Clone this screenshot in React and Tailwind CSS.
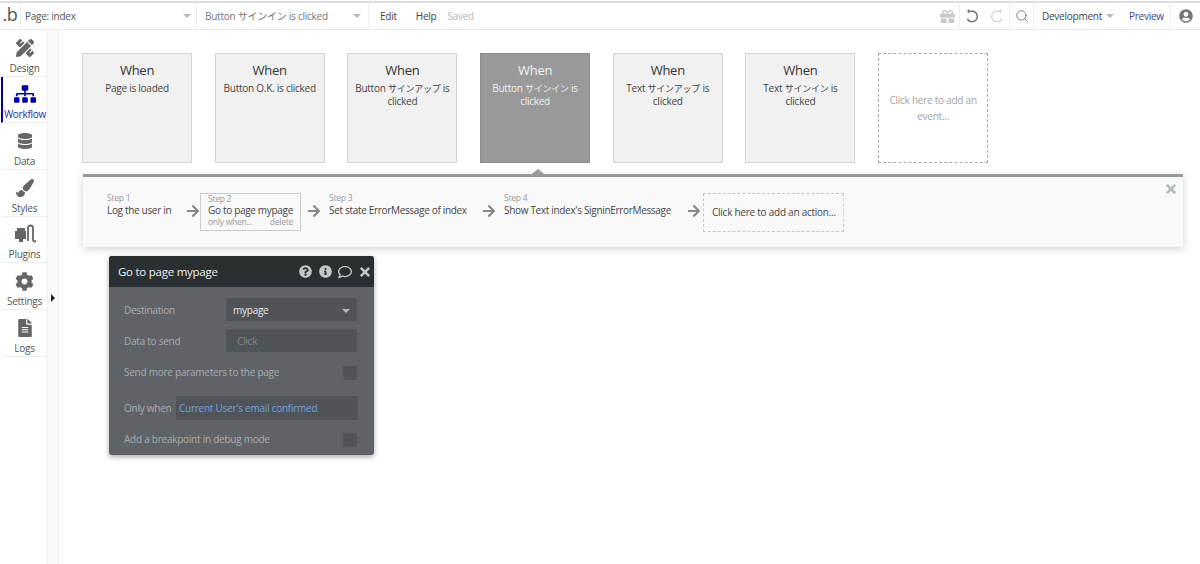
import { Search } from "lucide-react";
import {
  FaArrowRight,
  FaCog,
  FaDatabase,
  FaFileAlt,
  FaGift,
  FaInfoCircle,
  FaPaintBrush,
  FaPencilRuler,
  FaQuestionCircle,
  FaRegComment,
  FaSitemap,
  FaTimes,
  FaUserCircle,
} from "react-icons/fa";

const events = [
  { pre: "Page is loaded" },
  { pre: "Button O.K. is clicked" },
  { pre: "Button ", jp: "サインアップ" },
  { pre: "Button ", jp: "サインイン", active: true },
  { pre: "Text ", jp: "サインアップ" },
  { pre: "Text ", jp: "サインイン" },
];

function Caret({ className = "" }) {
  return <span className={`w-0 h-0 border-x-[4px] border-x-transparent border-t-[4px] border-t-[#b9b9b9] ${className}`} />;
}

function PluginIcon() {
  return (
    <svg width="22" height="20" viewBox="0 0 22 20" fill="none">
      <path d="M1 7h2V4h8v3h1v8H9v3H5v-3H1z" fill="#666" />
      <path d="M14 17V4a2.5 2.5 0 0 1 5 0v12a1.5 1.5 0 0 0 3 0" stroke="#666" strokeWidth="1.8" />
    </svg>
  );
}

function ArcIcon({ color, flip }) {
  return (
    <svg width="14" height="14" viewBox="0 0 14 14" fill="none" className={flip ? "-scale-x-100" : ""}>
      <path d="M3.5 2.2H7a5.2 5.2 0 1 1-4.6 7.6" stroke={color} strokeWidth="1.5" />
      <path d="M3.4 0.4v3.6" stroke={color} strokeWidth="1.5" />
    </svg>
  );
}

function TopBar() {
  return (
    <header className="h-[29px] shrink-0 flex items-stretch bg-white border-t-2 border-t-[#dedede] border-b border-b-[#eaeaea] text-[10px] text-[#555] mt-px">
      <div className="w-[21px] shrink-0 border-r border-[#efefef] flex items-center justify-center text-[18px] leading-none text-[#555] pb-1">.b</div>
      <div className="w-[176px] shrink-0 border-r border-[#efefef] flex items-center justify-between pl-1 pr-[5px]">
        <span>Page: index</span>
        <Caret />
      </div>
      <div className="w-[172px] shrink-0 border-r border-[#efefef] flex items-center justify-between pl-2 pr-[7px] text-[#777]">
        <span>Button サインイン is clicked</span>
        <Caret />
      </div>
      <div className="flex items-center pl-[11px] gap-[19px]">
        <span className="text-[#444]">Edit</span>
        <span className="text-[#444]">Help</span>
        <span className="text-[#b5b5b5] -ml-[8px]">Saved</span>
      </div>
      <div className="flex-1" />
      <div className="w-[20px] flex items-center justify-start -mr-px">
        <FaGift className="text-[#c8c8c8] text-[15px]" />
      </div>
      <div className="w-[51px] border-x border-[#f0f0f0] flex items-center justify-center gap-[11px]">
        <ArcIcon color="#777" />
        <ArcIcon color="#d8d8d8" flip />
      </div>
      <div className="w-[24px] border-r border-[#f0f0f0] flex items-center justify-center">
        <Search size={14} strokeWidth={1.6} className="text-[#777]" />
      </div>
      <div className="w-[137px] border-r border-[#f0f0f0] flex items-center pl-[8px] text-[#444]">
        <span>Development</span>
        <Caret className="ml-[4px]" />
        <span className="ml-[15px] text-[#3b3f9c]">Preview</span>
      </div>
      <div className="w-[29px] flex items-center justify-center pl-[1px]">
        <FaUserCircle className="text-[#777] text-[14px]" />
      </div>
    </header>
  );
}

function Sidebar() {
  const items = [
    { label: "Design", icon: <FaPencilRuler className="text-[18px] text-[#666]" /> },
    { label: "Workflow", icon: <FaSitemap className="text-[22px] text-[#0000a8]" />, active: true },
    { label: "Data", icon: <FaDatabase className="text-[16px] text-[#666]" /> },
    { label: "Styles", icon: <FaPaintBrush className="text-[18px] text-[#666]" /> },
    { label: "Plugins", icon: <PluginIcon /> },
    { label: "Settings", icon: <FaCog className="text-[19px] text-[#666]" /> },
    { label: "Logs", icon: <FaFileAlt className="text-[18px] text-[#666]" /> },
  ];
  return (
    <aside className="w-[48px] shrink-0 border-r border-[#f0f0f0] text-[10px] text-[#555]">
      {items.map((item) => (
        <div
          key={item.label}
          className={`h-[46.7px] flex flex-col items-center justify-end border-b border-[#ececec] pb-px ${
            item.active ? "border-l-[2px] border-l-[#0000a8] ml-px text-[#2a2aa8]" : "ml-[2px]"
          }`}
        >
          <div className="h-[24px] flex items-center justify-center">{item.icon}</div>
          <span className="leading-[14px] mt-[1px]">{item.label}</span>
        </div>
      ))}
    </aside>
  );
}

function EventCard({ pre, jp, active }) {
  return (
    <div
      className={`w-[110px] h-[110px] shrink-0 border px-1 pt-[8px] text-center ${
        active ? "bg-[#999] border-[#8c8c8c] text-white" : "bg-[#f1f1f1] border-[#d4d4d4] text-[#444]"
      }`}
    >
      <div className={`text-[13px] leading-[16px] ${active ? "text-[#f2f2f2]" : "text-[#333]"}`}>When</div>
      <div className={`text-[10px] leading-[12px] mt-[4px] ${active ? "text-[#eeeeee]" : ""}`}>
        {jp ? (
          <>
            <div className="whitespace-nowrap">
              {pre}
              <span className="text-[9px]">{jp}</span> is
            </div>
            <div>clicked</div>
          </>
        ) : (
          pre
        )}
      </div>
    </div>
  );
}

function StepArrow() {
  return <FaArrowRight className="text-[14px] text-[#888] shrink-0 mb-[3px]" />;
}

function Step({ n, text, className = "" }) {
  return (
    <div className={`shrink-0 whitespace-nowrap mb-[14px] ${className}`}>
      <div className="text-[8.5px] leading-[10px] text-[#999]">Step {n}</div>
      <div className="text-[10px] leading-[14px] text-[#444] tracking-[-0.32px]">{text}</div>
    </div>
  );
}

function Steps() {
  return (
    <section className="relative w-[1100px] h-[73px] mt-[11px] ml-[1px] bg-[#f9f9f9] border-t-[3px] border-[#999] shadow-[0_2px_8px_rgba(0,0,0,0.18)] flex items-center pl-[24px]">
      <span className="absolute -top-[8px] left-[449px] w-0 h-0 border-x-[6px] border-x-transparent border-b-[5px] border-b-[#999]" />
      <Step n={1} text="Log the user in" className="w-[79px]" />
      <span className="w-[13px]"><StepArrow /></span>
      <div className="ml-[1px] w-[101px] h-[38px] shrink-0 border border-[#c8cdd0] px-[7px] whitespace-nowrap">
        <div className="text-[8.5px] leading-[9px] text-[#999]">Step 2</div>
        <div className="text-[10px] leading-[14px] text-[#444] tracking-[-0.32px]">Go to page mypage</div>
        <div className="flex justify-between text-[8.5px] leading-[9px] text-[#999]">
          <span>only when...</span>
          <span>delete</span>
        </div>
      </div>
      <span className="ml-[6px] w-[22px]"><StepArrow /></span>
      <Step n={3} text="Set state ErrorMessage of index" className="w-[153px]" />
      <span className="w-[22px]"><StepArrow /></span>
      <Step n={4} text="Show Text index's SigninErrorMessage" className="w-[183px]" />
      <span className="w-[16px]"><StepArrow /></span>
      <div className="w-[141px] h-[39px] shrink-0 border border-dashed border-[#c9c9c9] flex items-center pl-[8px] text-[10px] text-[#444] whitespace-nowrap">
        Click here to add an action...
      </div>
      <FaTimes className="absolute top-[5px] right-[5px] text-[14px] text-[#b5babd]" />
    </section>
  );
}

function Check() {
  return <span className="w-[14px] h-[14px] bg-[#505458]" />;
}

function Editor() {
  return (
    <section className="ml-[27px] mt-[9px] w-[265px] h-[199px] rounded-[3px] overflow-hidden bg-[#5f6367] shadow-[0_2px_5px_rgba(0,0,0,0.35)] text-[10px] text-[#a9acaf]">
      <div className="h-[31px] bg-[#2a2f32] flex items-center pl-[9px] pr-[2px] text-white">
        <span className="text-[11.5px] flex-1 text-[#eef0f0]">Go to page mypage</span>
        <FaQuestionCircle className="text-[13px] text-[#c4c6c8]" />
        <FaInfoCircle className="text-[13px] text-[#c4c6c8] ml-[7px]" />
        <FaRegComment className="text-[14px] text-[#c4c6c8] ml-[6px]" />
        <FaTimes className="text-[14px] text-[#c4c6c8] ml-[6px]" />
      </div>
      <div className="pl-[15px] pr-[17px]">
        <div className="h-[23px] mt-[11px] flex items-center">
          <span className="w-[102px] pt-[2px]">Destination</span>
          <div className="w-[131px] h-[23px] bg-[#505458] flex items-center justify-between pt-[2px] px-[7px] text-[#e4e5e6]">
            <span>mypage</span>
            <Caret />
          </div>
        </div>
        <div className="h-[23px] mt-[8px] flex items-center">
          <span className="w-[102px] pt-[2px]">Data to send</span>
          <div className="w-[131px] h-[23px] bg-[#505458] flex items-center pt-[2px] pl-[11px] text-[#85898c]">Click</div>
        </div>
        <div className="h-[14px] mt-[14px] flex items-center justify-between">
          <span className="pb-[2px]">Send more parameters to the page</span>
          <Check />
        </div>
        <div className="h-[24px] mt-[16px] -mr-px flex items-center">
          <span className="w-[52px] shrink-0 whitespace-nowrap">Only when</span>
          <div className="flex-1 h-[24px] bg-[#505458] flex items-center pl-[3px] text-[#6ea4e0]">Current User's email confirmed</div>
        </div>
        <div className="h-[14px] mt-[13px] flex items-center justify-between">
          <span className="pb-[2px]">Add a breakpoint in debug mode</span>
          <Check />
        </div>
      </div>
    </section>
  );
}

export default function App() {
  return (
    <div className="relative w-[1200px] h-[564px] overflow-hidden flex flex-col bg-white tracking-[-0.25px] font-['Open_Sans','Noto_Sans_CJK_JP',sans-serif]">
      <TopBar />
      <div className="flex-1 flex min-h-0">
        <Sidebar />
        <div className="w-[11px] shrink-0 bg-[#fafafa] border-r border-[#ededed]" />
        <main className="flex-1 pl-[23px] pt-[23px]">
          <div className="flex gap-[22.7px]">
            {events.map((e) => (
              <EventCard key={e.pre + (e.jp || "")} {...e} />
            ))}
            <div className="w-[110px] h-[110px] shrink-0 border border-dashed border-[#a8a8a8] flex items-center justify-center text-center px-1 text-[10px] leading-[16px] text-[#a3a3a3]">
              Click here to add an event...
            </div>
          </div>
          <Steps />
          <Editor />
        </main>
      </div>
      <span className="absolute left-[51px] top-[294px] w-0 h-0 border-y-[4px] border-y-transparent border-l-[4px] border-l-[#222]" />
    </div>
  );
}
